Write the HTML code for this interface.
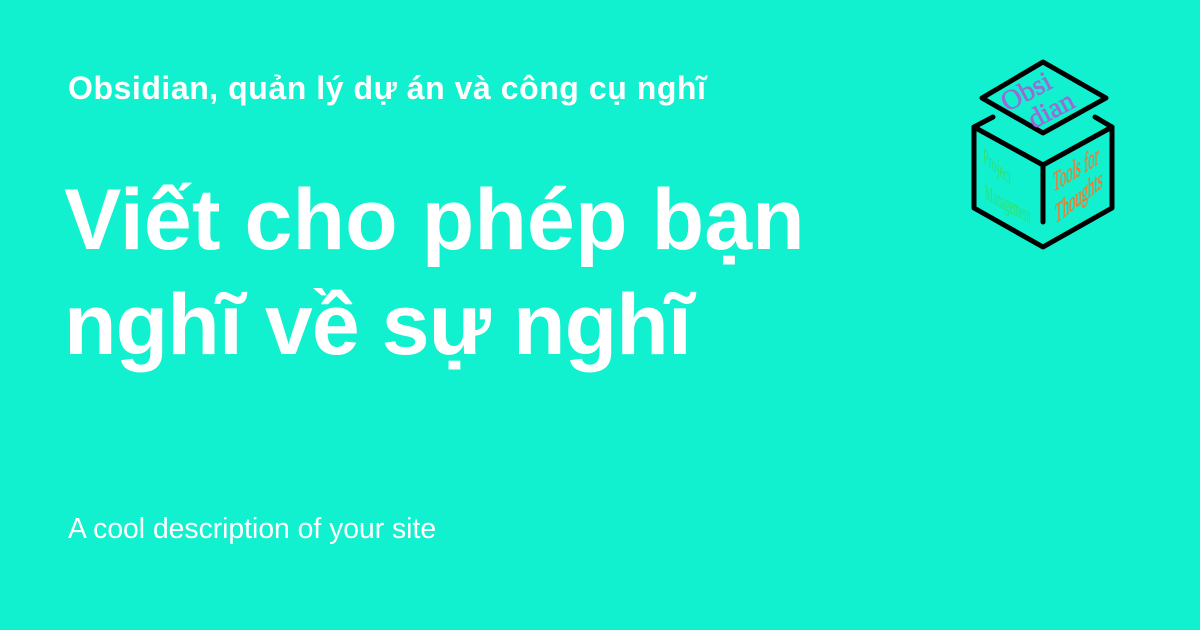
<!DOCTYPE html>
<html><head><meta charset="utf-8"><style>
html,body{margin:0;padding:0}
body{width:1200px;height:630px;background:#11f0cf;position:relative;overflow:hidden;font-family:"Liberation Sans",Arial,sans-serif;color:#fff}
.sub{position:absolute;left:68px;top:70px;font-size:32px;font-weight:bold;white-space:nowrap;letter-spacing:0.55px}
.title{position:absolute;left:64px;top:168px;font-size:86px;font-weight:bold;line-height:105px;white-space:nowrap;letter-spacing:0.1px}
.l2{letter-spacing:-0.9px}
.desc{position:absolute;left:68px;top:512px;font-size:28.3px;white-space:nowrap}
svg{position:absolute;left:0;top:0}
</style></head><body>
<div class="sub">Obsidian, quản lý dự án và công cụ nghĩ</div>
<div class="title">Viết cho phép bạn<br><span class="l2">nghĩ về sự nghĩ</span></div>
<div class="desc">A cool description of your site</div>
<svg width="1200" height="630" viewBox="0 0 1200 630">
<g fill="none" stroke="#000" stroke-width="5" stroke-linejoin="round" stroke-linecap="round">
<polygon points="1043,62 1106,98 1043,133 982,98"/>
<polyline points="993,117 974,127 974,208 1043,247 1112,208 1112,127 1095,117"/>
<polyline points="974,127 1043,165 1112,127"/>
<line x1="1043" y1="165" x2="1043" y2="222"/>
</g>
<text transform="translate(1007,112) rotate(-28)" font-family="Liberation Serif" font-size="28" stroke="#9a6ad6" stroke-width="0.6" fill="#9a6ad6">Obsi</text>
<text transform="translate(1034,129) rotate(-28)" font-family="Liberation Serif" font-size="28" stroke="#9a6ad6" stroke-width="0.6" fill="#9a6ad6">dian</text>
<text transform="translate(983,162) skewY(40) scale(0.45,1)" font-family="Liberation Serif" font-size="22" fill="#2fe070">Project</text>
<text transform="translate(985,199) skewY(28) scale(0.4,1)" font-family="Liberation Serif" font-size="22" fill="#2fe070">Management</text>
<text transform="translate(1053,192) skewY(-32) scale(0.45,1)" font-family="Liberation Serif" font-size="28" stroke="#f07a30" stroke-width="0.5" fill="#f07a30">Tools for</text>
<text transform="translate(1055,224) skewY(-38) scale(0.45,1)" font-family="Liberation Serif" font-size="28" stroke="#f07a30" stroke-width="0.5" fill="#f07a30">Thoughts</text>
</svg>
</body></html>
